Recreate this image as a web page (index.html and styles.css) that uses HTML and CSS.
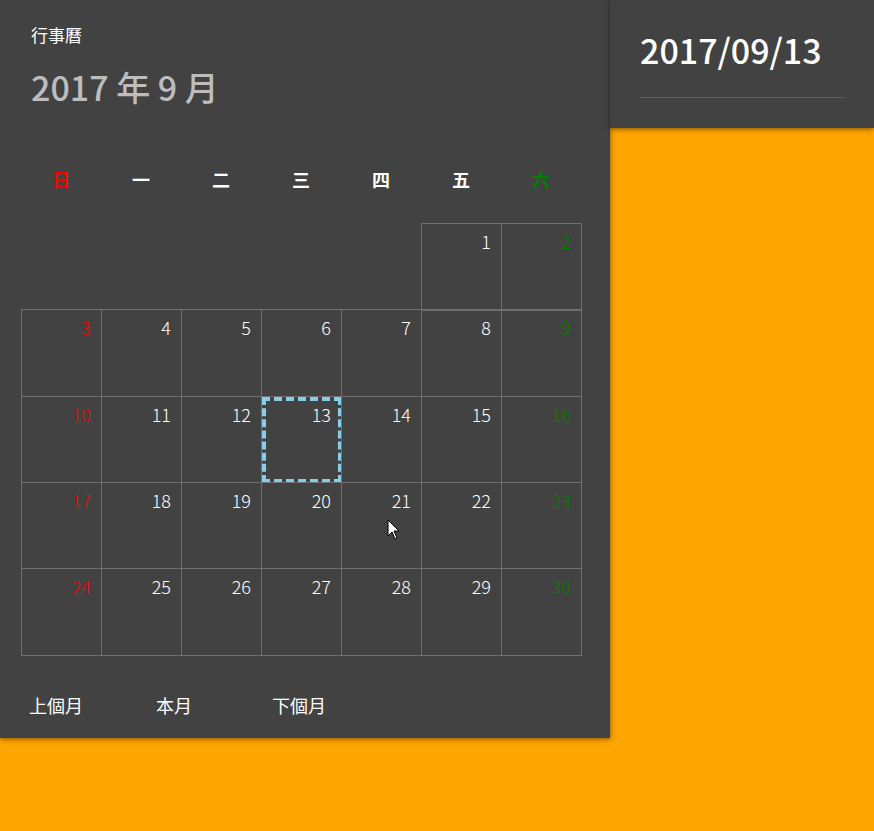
FILE: index.html
```html
<!DOCTYPE html>
<html lang="zh-Hant">
<head>
<meta charset="utf-8">
<title>行事曆</title>
<link rel="stylesheet" href="styles.css">
</head>
<body>
<div class="page">
  <section class="calendar">
    <div class="head">
      <div class="label">行事曆</div>
      <div class="title">2017 年 9 月</div>
    </div>
    <div class="weekdays">
      <div class="wd sun">日</div>
      <div class="wd">一</div>
      <div class="wd">二</div>
      <div class="wd">三</div>
      <div class="wd">四</div>
      <div class="wd">五</div>
      <div class="wd sat">六</div>
    </div>
    <div class="grid">
      <div class="blank"></div>
      <div class="blank"></div>
      <div class="blank"></div>
      <div class="blank"></div>
      <div class="blank"></div>
      <div class="day first">1</div>
      <div class="day first sat">2</div>

      <div class="day sun">3</div>
      <div class="day">4</div>
      <div class="day">5</div>
      <div class="day">6</div>
      <div class="day">7</div>
      <div class="day">8</div>
      <div class="day sat">9</div>

      <div class="day sun">10</div>
      <div class="day">11</div>
      <div class="day">12</div>
      <div class="day selected">13</div>
      <div class="day">14</div>
      <div class="day">15</div>
      <div class="day sat">16</div>

      <div class="day sun">17</div>
      <div class="day">18</div>
      <div class="day">19</div>
      <div class="day">20</div>
      <div class="day">21</div>
      <div class="day">22</div>
      <div class="day sat">23</div>

      <div class="day sun">24</div>
      <div class="day">25</div>
      <div class="day">26</div>
      <div class="day">27</div>
      <div class="day">28</div>
      <div class="day">29</div>
      <div class="day sat">30</div>
    </div>
    <div class="footer">
      <span class="btn btn-prev">上個月</span>
      <span class="btn btn-now">本月</span>
      <span class="btn btn-next">下個月</span>
    </div>
    <svg class="cursor" width="14" height="22" viewBox="0 0 14 22">
      <path d="M1 1 L1 17 L5 13 L8 20 L10 19 L7 12 L12 12 Z" fill="#fff" stroke="#000" stroke-width="1"/>
    </svg>
  </section>
  <aside class="datebox">
    <div class="date">2017/09/13</div>
    <div class="rule"></div>
  </aside>
</div>
</body>
</html>
```
FILE: styles.css
```css
html, body {
  margin: 0;
  padding: 0;
}
body {
  background: #ffa500;
  font-family: "Noto Sans CJK TC", "Noto Sans", sans-serif;
  width: 874px;
  height: 831px;
  overflow: hidden;
}
.page {
  display: flex;
  align-items: flex-start;
}
.calendar {
  position: relative;
  width: 610px;
  height: 738px;
  background: #424242;
  box-shadow: 0 1px 6px rgba(0,0,0,0.3), 0 1px 4px rgba(0,0,0,0.25);
  z-index: 1;
  flex: none;
}
.head {
  padding: 23px 31px 0;
}
.label {
  color: #fff;
  font-size: 17px;
  line-height: 24px;
}
.title {
  margin-top: 16px;
  color: #bdbdbd;
  font-size: 34px;
  font-weight: 500;
  line-height: 48px;
}
.weekdays {
  margin: 48px 0 0 21px;
  display: grid;
  grid-template-columns: repeat(7, 80px);
  height: 40px;
  align-items: center;
}
.wd {
  text-align: center;
  color: #fff;
  font-size: 18px;
  font-weight: 700;
  line-height: 40px;
}
.wd.sun { color: #ff0000; }
.wd.sat { color: #008000; }
.grid {
  margin: 24px 0 0 21px;
  display: grid;
  grid-template-columns: repeat(7, 80px);
  grid-template-rows: 86px 87px 86px 86px 87px;
}
.day {
  position: relative;
  width: 81px;
  height: calc(100% + 1px);
  box-sizing: border-box;
  border: 1px solid #6f6f6f;
  color: #fff;
  font-size: 18px;
  font-weight: 200;
  line-height: 24px;
  text-align: right;
  padding: 5px 10px 0 0;
}
.day.first {
  height: calc(100% + 2px);
}
.day.sun { color: #ff0000; }
.day.sat { color: #008000; }
.day.selected::after {
  content: "";
  position: absolute;
  left: 0;
  top: 0;
  width: 80px;
  height: 86px;
  box-sizing: border-box;
  border: 4px dashed #87ceeb;
}
.footer {
  margin-top: 38px;
  display: flex;
  align-items: center;
  height: 24px;
  color: #fff;
  font-size: 18px;
  line-height: 24px;
}
.btn-prev { margin-left: 29px; }
.btn-now { margin-left: 73px; }
.btn-next { margin-left: 80px; }
.cursor {
  position: absolute;
  left: 387px;
  top: 519px;
}
.datebox {
  width: 264px;
  height: 128px;
  background: #424242;
  box-sizing: border-box;
  padding: 26px 29px 0 30px;
  box-shadow: 0 1px 6px rgba(0,0,0,0.3), 0 1px 4px rgba(0,0,0,0.25);
  z-index: 2;
  flex: none;
}
.date {
  color: #fff;
  font-size: 34px;
  font-weight: 500;
  line-height: 48px;
}
.rule {
  margin-top: 23px;
  height: 1px;
  background: #5c5c5c;
}
```
